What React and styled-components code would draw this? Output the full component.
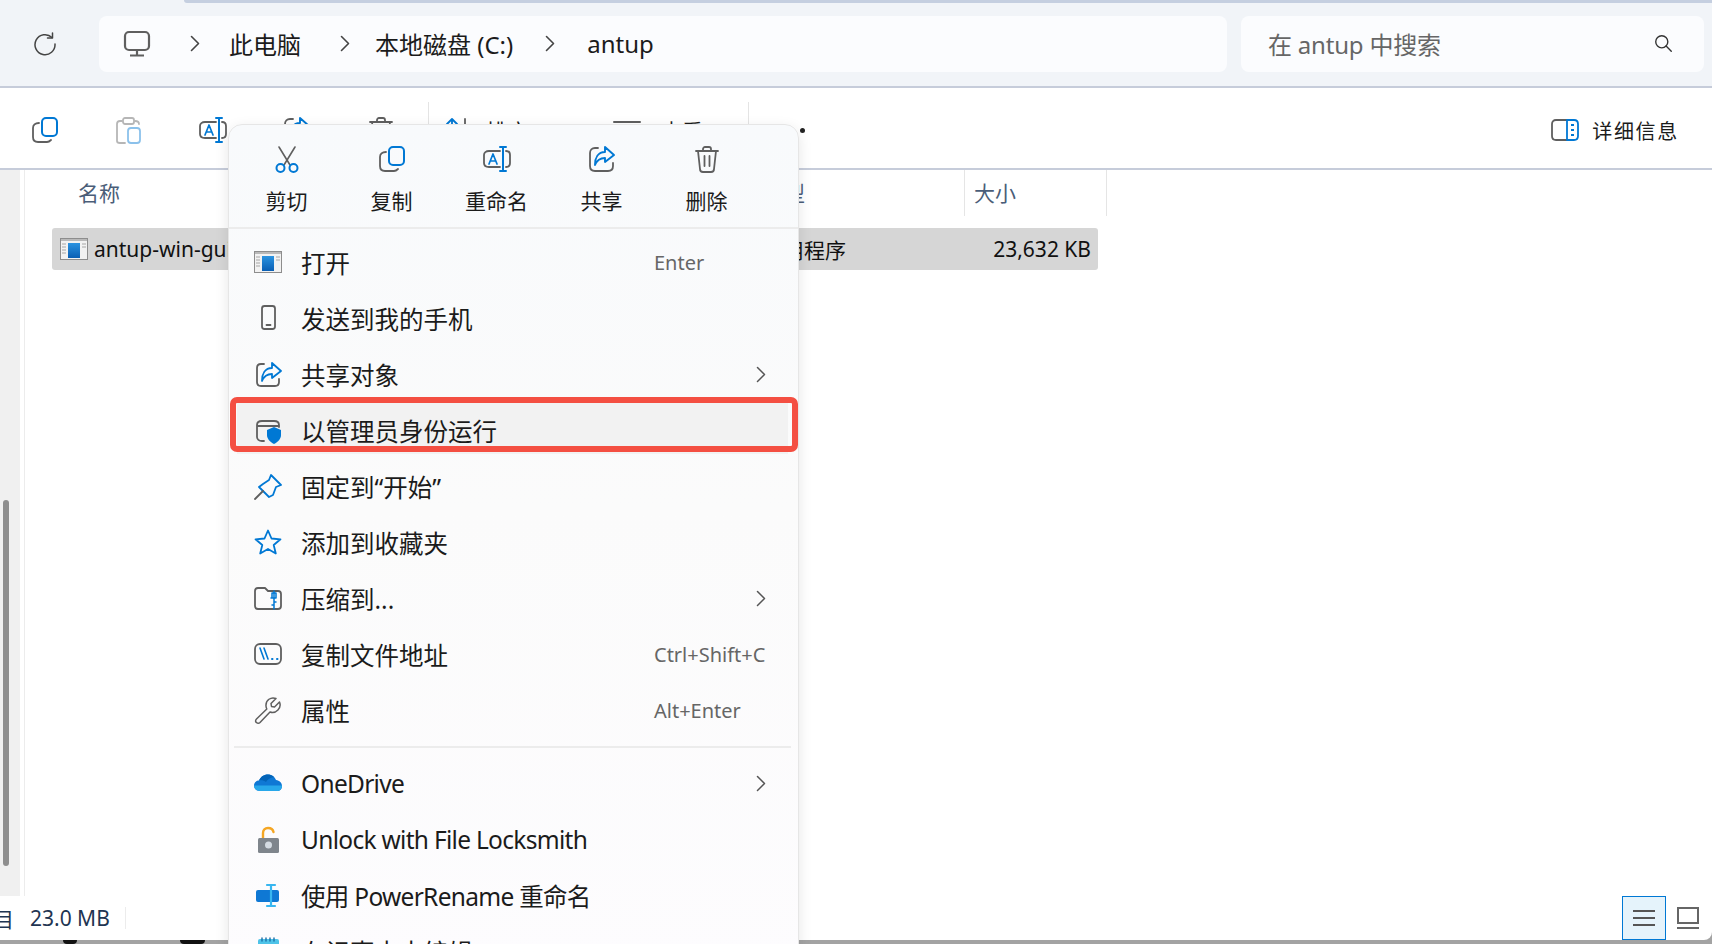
import React from "react"
import styled, { createGlobalStyle } from "styled-components"

const BLUE = "#0078d4"
const GRAY = "#5f5f5f"

const Global = createGlobalStyle`
  html, body { margin: 0; padding: 0; background: #fff; }
  * { box-sizing: border-box; }
  body { font-family: "Noto Sans", "Noto Sans CJK SC", sans-serif; color: #1b1b1b; }
`

const Page = styled.div`
  width: 1712px;
  height: 944px;
  overflow: hidden;
  position: relative;
  display: flex;
  flex-direction: column;
  background: #fff;
`

const TopBar = styled.div`
  height: 88px;
  background: #f1f4f8;
  border-bottom: 2px solid #c6ccda;
`
const TabEdge = styled.div`
  height: 3px;
  margin-left: 184px;
  background: #c5cfe0;
  border-bottom-left-radius: 4px;
`
const AddressRow = styled.div`
  display: flex;
  align-items: center;
  padding: 13px 8px 0 0;
`
const Reload = styled.div`
  width: 99px;
  padding-left: 33px;
  display: flex;
`
const Crumbs = styled.div`
  width: 1128px;
  height: 56px;
  background: #fbfcfe;
  border-radius: 8px;
  display: flex;
  align-items: center;
  padding: 0 0 2px 24px;
  font-size: 24px;
`
const CrumbText = styled.span`
  margin-left: ${p => p.$left}px;
`
const CrumbArrow = styled.svg`
  margin-left: ${p => p.$left}px;
  flex: none;
`
const SearchBox = styled.div`
  margin-left: 14px;
  flex: 1;
  height: 56px;
  background: #fbfcfe;
  border-radius: 8px;
  display: flex;
  align-items: center;
  justify-content: space-between;
  padding: 0 31px 2px 27px;
  font-size: 24px;
  letter-spacing: -0.2px;
  color: #666;
`

const ToolBar = styled.div`
  height: 82px;
  flex: none;
  border-bottom: 2px solid #c6ccda;
  display: flex;
  align-items: flex-start;
  padding: 14px 33px 0 3px;
  background: #fff;
`
const ToolButton = styled.div`
  width: 84px;
  height: 56px;
  display: flex;
  align-items: center;
  justify-content: center;
  opacity: ${p => (p.$dim ? 0.45 : 1)};
`
const ToolSep = styled.div`
  width: 1px;
  height: 66px;
  background: #e4e4e4;
  margin-left: ${p => p.$left}px;
`
const ToolLabel = styled.div`
  display: flex;
  align-items: center;
  height: 56px;
  margin-left: ${p => p.$left}px;
  font-size: 21px;
  gap: ${p => p.$gap || 0}px;
`
const Dots = styled.div`
  display: flex;
  gap: 10px;
  margin-left: 21px;
  height: 56px;
  align-items: center;
`
const Dot = styled.span`
  width: 5px;
  height: 5px;
  border-radius: 50%;
  background: #222;
`
const Details = styled.div`
  margin-left: auto;
  height: 56px;
  display: flex;
  align-items: center;
  gap: 13px;
  font-size: 20px;
  letter-spacing: 1.7px;
`

const Content = styled.div`
  flex: 1;
  display: flex;
  min-height: 0;
`
const NavStrip = styled.div`
  width: 20px;
  background: #f0f0f0;
  padding: 330px 0 0 3px;
`
const Thumb = styled.div`
  width: 6px;
  height: 366px;
  border-radius: 3px;
  background: #8e8e8e;
`
const Splitter = styled.div`
  width: 1px;
  margin-left: 4px;
  background: #ececec;
`
const ListPane = styled.div`
  flex: 1;
  padding-left: 27px;
`
const Header = styled.div`
  display: flex;
  height: 46px;
  margin-left: 17px;
  font-size: 21px;
  color: #4a5d78;
`
const HeaderCell = styled.div`
  width: ${p => p.$w}px;
  padding: 7px 0 0 9px;
  border-right: ${p => (p.$line ? "1px solid #e5e5e5" : "none")};
`
const FileRow = styled.div`
  width: 1046px;
  height: 42px;
  margin-top: 12px;
  background: #d6d6d6;
  border-radius: 3px;
  display: flex;
  align-items: center;
  padding: 0 7px 0 8px;
  font-size: 21px;
  color: #111;
`
const FileName = styled.div`
  width: 702px;
  display: flex;
  align-items: center;
  gap: 6px;
`
const FileType = styled.div`
  flex: 1;
`

const Footer = styled.div`
  flex: none;
  background: #a3a3a3;
`
const StatusBar = styled.div`
  height: 44px;
  display: flex;
  align-items: center;
  font-size: 21px;
  color: #1f3552;
  background: #fff;
  border-bottom-right-radius: 8px;
`
const ClippedText = styled.span`
  width: 14px;
  overflow: hidden;
  direction: rtl;
  flex: none;
`
const Size = styled.span`
  margin-left: 16px;
`
const StatusSep = styled.div`
  width: 1px;
  height: 22px;
  background: #ececec;
  margin-left: 15px;
`
const ViewGroup = styled.div`
  margin-left: auto;
  padding-right: 2px;
  display: flex;
  align-items: center;
`
const ViewButton = styled.div`
  width: 44px;
  height: 44px;
  display: flex;
  align-items: center;
  justify-content: center;
  background: ${p => (p.$on ? "#e5f3fb" : "transparent")};
  border: ${p => (p.$on ? `1px solid ${BLUE}` : "none")};
`
const BottomEdge = styled.div`
  height: 4px;
  display: flex;
`
const Blob = styled.div`
  width: ${p => p.$w}px;
  margin-left: ${p => p.$left}px;
  background: #111;
  border-radius: 0 0 4px 4px;
`

const Menu = styled.div`
  position: absolute;
  left: 228px;
  top: 124px;
  width: 571px;
  height: 860px;
  background: linear-gradient(180deg, #f8fafc 0%, #fbfbfb 45%, #fdfcfe 100%);
  border: 1px solid #e6e6e6;
  border-radius: 14px;
  box-shadow: 0 4px 14px rgba(0, 0, 0, 0.1);
`
const QuickBar = styled.div`
  height: 104px;
  padding-left: 5px;
  display: flex;
  border-bottom: 2px solid #ececec;
`
const QuickItem = styled.div`
  width: 105px;
  display: flex;
  flex-direction: column;
  align-items: center;
  padding-top: 20px;
  font-size: 21px;
  gap: 13px;
  line-height: 30px;
`
const Rows = styled.div`
  padding: 5px 10px 0 8px;
`
const Row = styled.div`
  position: relative;
  height: 56px;
  display: grid;
  grid-template-columns: 28px 1fr 134px;
  column-gap: 19px;
  align-items: center;
  padding-left: 17px;
  font-size: 24.5px;
  background: ${p => (p.$active ? "linear-gradient(#f2f2f2 0 52px, transparent 52px)" : "transparent")};
`
const RowLabel = styled.span`
  white-space: nowrap;
  letter-spacing: ${p => (p.$tight ? "-0.7px" : "0")};
`
const RowSide = styled.div`
  display: flex;
  justify-content: ${p => (p.$arrow ? "flex-end" : "flex-start")};
  padding-right: 22px;
  font-size: 20px;
  color: #666;
  white-space: nowrap;
`
const MenuRule = styled.div`
  height: 2px;
  margin: 8px -3px 7px -3px;
  background: #ececec;
`
const RedFrame = styled.div`
  position: absolute;
  left: -7px;
  right: -10px;
  top: -5px;
  height: 55px;
  border: 6px solid #f44f42;
  border-radius: 7px;
`

function Svg({ size = 28, h, children }) {
  return (
    <svg width={size} height={h || size} viewBox={`0 0 ${size} ${h || size}`} fill="none" strokeWidth="1.8" strokeLinecap="round" strokeLinejoin="round">
      {children}
    </svg>
  )
}

const Scissors = () => (
  <Svg>
    <path d="M6 2 L17 20 M22 2 L11 20" stroke={GRAY} strokeWidth="1.6" />
    <circle cx="7.5" cy="23" r="4" stroke={BLUE} strokeWidth="2" />
    <circle cx="20.5" cy="23" r="4" stroke={BLUE} strokeWidth="2" />
  </Svg>
)
const Copy = () => (
  <Svg>
    <rect x="11" y="2" width="15" height="18" rx="4" stroke={BLUE} strokeWidth="2" />
    <path d="M8 7 C4 7 2 9 2 12 V21 C2 24 4 26 7 26 H16 C18 26 19 25 20 24" stroke={GRAY} />
  </Svg>
)
const Paste = () => (
  <Svg>
    <path d="M7 5 H5 C3 5 2 6 2 8 V25 C2 26 3 27 5 27 H10" stroke={GRAY} />
    <path d="M20 5 C22 5 24 6 24 8" stroke={GRAY} />
    <rect x="8" y="2" width="11" height="6" rx="2" stroke={GRAY} />
    <rect x="13" y="12" width="12" height="15" rx="3" stroke={BLUE} />
  </Svg>
)
const Rename = () => (
  <Svg>
    <path d="M17 6 H6 C3 6 1 8 1 10 V18 C1 21 3 22 6 22 H17 M23 6 C26 6 27 8 27 10 V18 C27 21 26 22 23 22" stroke={GRAY} />
    <path d="M6 19 L10 9 L14 19 M7.5 16 H12.5" stroke={BLUE} strokeWidth="1.7" />
    <path d="M20 3 V25 M17 2 H23 M17 26 H23" stroke={BLUE} strokeWidth="2" />
  </Svg>
)
const Share = () => (
  <Svg>
    <path d="M10 3 H7 C4 3 2 5 2 8 V21 C2 24 4 26 7 26 H20 C23 26 25 24 25 21 V18" stroke={GRAY} />
    <path d="M17 2 L26 10 L17 17 V13 C12 13 9 15 7 20 C7 13 10 7 17 7 Z" stroke={BLUE} strokeWidth="1.9" />
  </Svg>
)
const Trash = () => (
  <Svg>
    <path d="M3 6 H25 M10 6 V4 C10 3 11 2 12 2 H16 C17 2 18 3 18 4 V6" stroke={GRAY} />
    <path d="M5 6 L7 24 C7 26 8 27 10 27 H18 C20 27 21 26 21 24 L23 6" stroke={GRAY} />
    <path d="M11.5 11 V21 M16.5 11 V21" stroke={GRAY} />
  </Svg>
)
const SortIcon = () => (
  <Svg>
    <path d="M6 3 V22 M1 8 L6 3 L11 8" stroke={BLUE} />
    <path d="M19 3 V22 M14 17 L19 22 L24 17" stroke={GRAY} />
  </Svg>
)
const ViewIcon = () => (
  <Svg>
    <path d="M1 6 H27" stroke={GRAY} strokeWidth="2" />
    <rect x="1" y="11" width="26" height="11" rx="2" stroke={BLUE} />
  </Svg>
)
const AppIcon = () => (
  <svg width="28" height="22" viewBox="0 0 28 22">
    <defs>
      <linearGradient id="appBlue" x1="0" y1="0" x2="0" y2="1">
        <stop offset="0" stopColor="#2b93e0" />
        <stop offset="1" stopColor="#0a5fb4" />
      </linearGradient>
    </defs>
    <rect x="0.5" y="0.5" width="27" height="21" fill="#f2f2f2" stroke="#8d8d8d" />
    <rect x="1" y="1" width="26" height="2" fill="#b9b9b9" />
    <rect x="8" y="5" width="12" height="15" fill="url(#appBlue)" />
    <path d="M2 6 H6 M2 9 H6 M2 12 H6 M2 15 H6 M22 6 H26 M22 9 H26" stroke="#a6a6a6" strokeWidth="1" />
  </svg>
)
const Phone = () => (
  <Svg>
    <rect x="8" y="2" width="13" height="23" rx="2.5" stroke={GRAY} />
    <path d="M12.5 21 H16.5" stroke={GRAY} />
  </Svg>
)
const ShareSmall = () => (
  <Svg>
    <path d="M10 4 H7 C4 4 3 6 3 8 V22 C3 25 5 26 7 26 H21 C24 26 25 24 25 22 V19" stroke={GRAY} />
    <path d="M18 3 L27 11 L18 18 V14 C13 14 10 16 8 21 C8 14 11 8 18 8 Z" stroke={BLUE} />
  </Svg>
)
const AdminIcon = () => (
  <Svg>
    <path d="M10 25 H8 C5 25 3 23 3 21 V9 C3 6 5 5 8 5 H20 C23 5 25 6 25 9 V11 M3 10 H25" stroke={GRAY} />
    <path d="M20 11 L27 14 V19 C27 23 24 26 20 28 C16 26 13 23 13 19 V14 Z" fill={BLUE} />
  </Svg>
)
const Pin = () => (
  <Svg>
    <path d="M17 3 L27 13 L22 15 L19 23 L15 25 L5 15 L9 12 L15 8 Z" stroke={BLUE} />
    <path d="M9 19 L1 27" stroke={GRAY} />
  </Svg>
)
const Star = () => (
  <Svg>
    <path d="M14 2.5 L17.5 10.5 L26.5 11.3 L19.7 17 L21.8 25.5 L14 21 L6.2 25.5 L8.3 17 L1.5 11.3 L10.5 10.5 Z" stroke={BLUE} />
  </Svg>
)
const ZipFolder = () => (
  <Svg>
    <path d="M4 25 H24 C26 25 27 24 27 22 V10 C27 8 26 7 24 7 H14 L11 4 H4 C2 4 1 5 1 7 V22 C1 24 2 25 4 25 Z" stroke={GRAY} />
    <path d="M20 7 V25 M17 14 H22 V9 H18 V14 M20 18 H22 M18 21 H20" stroke={BLUE} strokeWidth="1.5" />
  </Svg>
)
const PathIcon = () => (
  <Svg>
    <rect x="1" y="4" width="26" height="20" rx="5" stroke={GRAY} />
    <path d="M6 8 L10 19 M10 8 L14 19" stroke={BLUE} strokeWidth="1.6" />
    <path d="M18 19 H18.5 M23 19 H23.5" stroke={BLUE} strokeWidth="2" />
  </Svg>
)
const Wrench = () => (
  <Svg>
    <path d="M25.5 6 L20.5 11 L17.5 10.5 L17 7.5 L22 2.5 C17 0.5 11.5 4 12 10 C12 11 12.3 12 12.8 13 L2.5 23 C1 24.5 1.5 26 2.5 26.5 C3.5 27.5 5 27.5 6 26.5 L16 16 C22 18 28 12 25.5 6 Z" stroke={GRAY} strokeWidth="1.5" />
  </Svg>
)
const OneDrive = () => (
  <Svg>
    <path d="M6 22 C2 22 0 19 0 16.5 C0 13.5 2.5 11.5 5 11.5 C7 7 11 5.5 14 5.5 C18 5.5 21 8 22 11 C25.5 11.5 28 13.5 28 17 C28 20 26 22 23 22 Z" fill="#0f78d4" />
    <path d="M5 11.5 C7 7 11 5.5 14 5.5 C16.5 5.5 18.5 6.5 20 8 C16 8.5 13.5 10.5 12 13 C10 11.5 7.5 11 5 11.5 Z" fill="#0364b8" />
    <path d="M6 22 C2 22 0 19 0 16.5 H28 C28 20 26 22 23 22 Z" fill="#28a8ea" />
  </Svg>
)
const LockIcon = () => (
  <Svg>
    <path d="M9 13 V8 C9 5 11 3 14 3 C17 3 19 4.5 19.5 7" stroke="#f5a623" strokeWidth="2.4" fill="none" />
    <rect x="4" y="13" width="21" height="15" rx="1.5" fill="#7f858c" />
    <circle cx="14.5" cy="20" r="3.5" fill="#d5dbe2" />
  </Svg>
)
const PowerRename = () => (
  <Svg>
    <rect x="2" y="9" width="23" height="12" rx="2" fill="#0f78d4" />
    <path d="M17 4 V25 M13 4 H21 M13 25 H21" stroke="#38b6f0" strokeWidth="2.2" />
  </Svg>
)
const Notepad = () => (
  <Svg>
    <rect x="4" y="2" width="21" height="24" rx="2" fill="#e8f7fb" />
    <rect x="4" y="2" width="21" height="8" rx="2" fill="#4ec3e8" />
    <path d="M8 1 V4 M12 1 V4 M16 1 V4 M20 1 V4" stroke="#1a6fa8" strokeWidth="1.4" />
  </Svg>
)
const Chevron = ({ size = 10 }) => (
  <svg width={size} height={size * 1.7} viewBox="0 0 10 17" fill="none">
    <path d="M1.5 1.5 L8.5 8.5 L1.5 15.5" stroke="#555" strokeWidth="1.5" strokeLinecap="round" strokeLinejoin="round" />
  </svg>
)

const quickActions = [
  { label: "剪切", icon: <Scissors /> },
  { label: "复制", icon: <Copy /> },
  { label: "重命名", icon: <Rename /> },
  { label: "共享", icon: <Share /> },
  { label: "删除", icon: <Trash /> },
]

const firstRows = [
  { label: "打开", icon: <AppIcon />, side: "Enter" },
  { label: "发送到我的手机", icon: <Phone /> },
  { label: "共享对象", icon: <ShareSmall />, arrow: true },
  { label: "以管理员身份运行", icon: <AdminIcon />, active: true },
  { label: "固定到“开始”", icon: <Pin /> },
  { label: "添加到收藏夹", icon: <Star /> },
  { label: "压缩到...", icon: <ZipFolder />, arrow: true },
  { label: "复制文件地址", icon: <PathIcon />, side: "Ctrl+Shift+C" },
  { label: "属性", icon: <Wrench />, side: "Alt+Enter" },
]

const secondRows = [
  { label: "OneDrive", icon: <OneDrive />, arrow: true, tight: true },
  { label: "Unlock with File Locksmith", icon: <LockIcon />, tight: true },
  { label: "使用 PowerRename 重命名", icon: <PowerRename />, tight: true },
  { label: "在记事本中编辑", icon: <Notepad /> },
]

function MenuRow({ item }) {
  return (
    <Row $active={item.active}>
      {item.icon}
      <RowLabel $tight={item.tight}>{item.label}</RowLabel>
      <RowSide $arrow={item.arrow}>{item.arrow ? <Chevron /> : item.side}</RowSide>
      {item.active && <RedFrame />}
    </Row>
  )
}

export default function App() {
  return (
    <Page>
      <Global />
      <TopBar>
        <TabEdge />
        <AddressRow>
          <Reload>
            <svg width="24" height="24" viewBox="0 0 24 24" fill="none" stroke="#444" strokeWidth="1.5" strokeLinecap="round" strokeLinejoin="round">
              <path d="M19 5.5 A10 10 0 1 0 22 12" />
              <path d="M19.5 1 V6 H14.5" />
            </svg>
          </Reload>
          <Crumbs>
            <svg width="28" height="27" viewBox="0 0 28 27" fill="none" stroke={GRAY} strokeWidth="2.2" strokeLinejoin="round">
              <rect x="2" y="2" width="24" height="18" rx="4" />
              <path d="M14 20 V25 M7 25.5 H21" />
            </svg>
            <CrumbArrow $left={39} width="10" height="17" viewBox="0 0 10 17" fill="none">
              <path d="M1.5 1.5 L8.5 8.5 L1.5 15.5" stroke="#444" strokeWidth="1.6" strokeLinecap="round" strokeLinejoin="round" />
            </CrumbArrow>
            <CrumbText $left={29}>此电脑</CrumbText>
            <CrumbArrow $left={39} width="10" height="17" viewBox="0 0 10 17" fill="none">
              <path d="M1.5 1.5 L8.5 8.5 L1.5 15.5" stroke="#444" strokeWidth="1.6" strokeLinecap="round" strokeLinejoin="round" />
            </CrumbArrow>
            <CrumbText $left={25}>本地磁盘 (C:)</CrumbText>
            <CrumbArrow $left={32} width="10" height="17" viewBox="0 0 10 17" fill="none">
              <path d="M1.5 1.5 L8.5 8.5 L1.5 15.5" stroke="#444" strokeWidth="1.6" strokeLinecap="round" strokeLinejoin="round" />
            </CrumbArrow>
            <CrumbText $left={32}>antup</CrumbText>
          </Crumbs>
          <SearchBox>
            <span>在 antup 中搜索</span>
            <svg width="19" height="19" viewBox="0 0 22 22" fill="none" stroke="#333" strokeWidth="1.6" strokeLinecap="round">
              <circle cx="9" cy="9" r="7" />
              <path d="M14 14 L20 20" />
            </svg>
          </SearchBox>
        </AddressRow>
      </TopBar>

      <ToolBar>
        <ToolButton><Copy /></ToolButton>
        <ToolButton $dim><Paste /></ToolButton>
        <ToolButton><Rename /></ToolButton>
        <ToolButton><Share /></ToolButton>
        <ToolButton><Trash /></ToolButton>
        <ToolSep $left={5} />
        <ToolLabel $left={17} $gap={12}><SortIcon />排序</ToolLabel>
        <ToolLabel $left={85} $gap={20}><ViewIcon />查看</ToolLabel>
        <ToolSep $left={45} />
        <Dots><Dot /><Dot /><Dot /></Dots>
        <Details>
          <svg width="28" height="22" viewBox="0 0 28 22" fill="none" strokeWidth="1.8" strokeLinejoin="round">
            <path d="M16 1 H5 C2.5 1 1 2.5 1 5 V17 C1 19.5 2.5 21 5 21 H16" stroke={GRAY} />
            <path d="M16 1 H23 C25.5 1 27 2.5 27 5 V17 C27 19.5 25.5 21 23 21 H16 Z" stroke={BLUE} />
            <path d="M20 6 H23 M20 11 H23 M20 16 H23" stroke={BLUE} />
          </svg>
          详细信息
        </Details>
      </ToolBar>

      <Content>
        <NavStrip><Thumb /></NavStrip>
        <Splitter />
        <ListPane>
          <Header>
            <HeaderCell $w={685}>名称</HeaderCell>
            <HeaderCell $w={211} $line>类型</HeaderCell>
            <HeaderCell $w={142} $line>大小</HeaderCell>
          </Header>
          <FileRow>
            <FileName><AppIcon />antup-win-gui.exe</FileName>
            <FileType>应用程序</FileType>
            <span>23,632 KB</span>
          </FileRow>
        </ListPane>
      </Content>

      <Footer>
        <StatusBar>
          <ClippedText>目</ClippedText>
          <Size>23.0 MB</Size>
          <StatusSep />
          <ViewGroup>
            <ViewButton $on>
              <svg width="22" height="18" viewBox="0 0 22 18" stroke="#555" strokeWidth="2">
                <path d="M0 2 H22 M0 9 H22 M0 16 H22" />
              </svg>
            </ViewButton>
            <ViewButton>
              <svg width="22" height="22" viewBox="0 0 22 22" fill="none" stroke="#666" strokeWidth="2">
                <rect x="1" y="1" width="20" height="15" />
                <path d="M0 21 H22" />
              </svg>
            </ViewButton>
          </ViewGroup>
        </StatusBar>
        <BottomEdge>
          <Blob $left={63} $w={14} />
          <Blob $left={103} $w={25} />
        </BottomEdge>
      </Footer>

      <Menu>
        <QuickBar>
          {quickActions.map(a => (
            <QuickItem key={a.label}>
              {a.icon}
              <span>{a.label}</span>
            </QuickItem>
          ))}
        </QuickBar>
        <Rows>
          {firstRows.map(r => <MenuRow key={r.label} item={r} />)}
          <MenuRule />
          {secondRows.map(r => <MenuRow key={r.label} item={r} />)}
        </Rows>
      </Menu>
    </Page>
  )
}
